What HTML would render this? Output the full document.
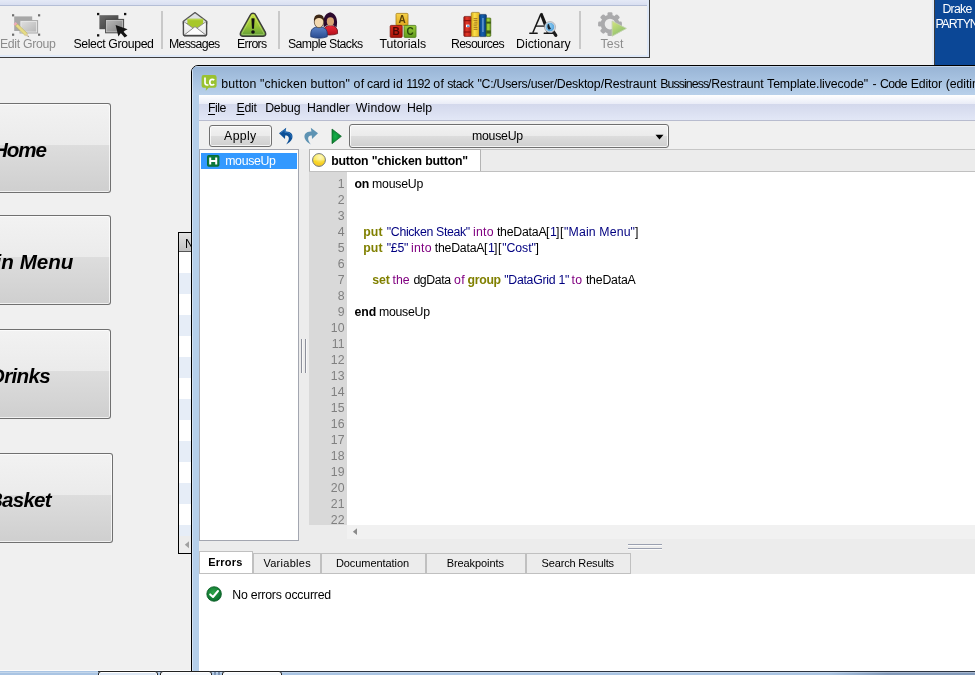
<!DOCTYPE html>
<html><head><meta charset="utf-8"><title>LiveCode</title>
<style>
html,body{margin:0;padding:0;}
html{overflow:hidden;width:975px;height:675px;}
body{width:975px;height:675px;overflow:hidden;background:#f0f0f0;position:relative;font-family:"Liberation Sans",sans-serif;}
div,span,svg{position:absolute;box-sizing:border-box;}
.t{white-space:pre;line-height:1;font-family:"Liberation Sans",sans-serif;}
.t u{text-decoration:underline;text-underline-offset:1.5px;}
.ln{will-change:transform;left:309px;width:35.5px;text-align:right;font-size:12.3px;line-height:1;color:#808080;font-family:"Liberation Sans",sans-serif;}
.big{position:absolute;overflow:hidden;box-shadow:inset 0 0 0 1px rgba(255,255,255,.7);border:1px solid #707070;border-left:none;border-radius:0 3px 3px 0;
  background:linear-gradient(#f2f2f2 0%,#ebebeb 46.5%,#dddddd 46.6%,#cfcfcf 100%);}
.big b{will-change:transform;position:absolute;white-space:pre;line-height:1;font-size:20.6px;font-style:italic;font-weight:bold;color:#000;text-align:right;}
.sep{width:2px;top:11px;height:38px;background:#c9c9c9;}
.btab{top:553px;height:21px;background:#ececec;border:1px solid #c0c0c0;}

</style></head>
<body>
<!-- ===== main toolbar window ===== -->
<div style="left:0;top:0;width:647px;height:5px;background:linear-gradient(#e4e9f6,#d9dff1)"></div>
<div style="left:0;top:5px;width:647px;height:1px;background:#b4bed6"></div>
<div style="left:647px;top:0;width:2px;height:57px;background:#dfe9f8"></div>
<div style="left:0;top:55px;width:649px;height:2px;background:#dfe9f8"></div>
<div style="left:649px;top:0;width:1px;height:58px;background:#3c3c3c"></div>
<div style="left:0;top:57px;width:650px;height:1px;background:#3c3c3c"></div>
<div class="sep" style="left:161px"></div>
<div class="sep" style="left:278px"></div>
<div class="sep" style="left:579px"></div>
<!-- Edit Group (disabled) -->
<svg style="left:10px;top:11px" width="34" height="30" viewBox="0 0 34 30">
  <defs><linearGradient id="eg1" x1="0" y1="0" x2="1" y2="1"><stop offset="0" stop-color="#e2e2e2"/><stop offset="1" stop-color="#b4b4b4"/></linearGradient></defs>
  <rect x="2" y="3.2" width="2.2" height="2.2" fill="#6e6e6e"/><rect x="28" y="3.2" width="2.2" height="2.2" fill="#6e6e6e"/>
  <rect x="2" y="22.6" width="2.2" height="2.2" fill="#6e6e6e"/><rect x="28" y="22.6" width="2.2" height="2.2" fill="#6e6e6e"/>
  <rect x="4.2" y="5.4" width="18" height="14.6" fill="#a7a7a7"/>
  <rect x="10" y="9.6" width="17.6" height="12.4" fill="url(#eg1)" stroke="#a9a9a9" stroke-width="1"/>
  <rect x="11" y="10.6" width="15.6" height="10.4" fill="none" stroke="#e9e9e9" stroke-width=".8"/>
  <g transform="translate(4.6,12.2) rotate(44)">
    <rect x="0" y="-1.5" width="2.6" height="3" fill="#f0a9b6"/>
    <rect x="2.6" y="-1.5" width="13.6" height="3" fill="#e7dc86" stroke="#b9ad55" stroke-width=".5"/>
    <path d="M16.2 -1.5L20.2 0L16.2 1.5Z" fill="#d9c9a9"/><path d="M18.6 -.6L20.4 0L18.6 .6Z" fill="#8a8a8a"/>
  </g>
</svg>
<!-- Select Grouped -->
<svg style="left:95px;top:10px" width="36" height="30" viewBox="0 0 36 30">
  <defs><linearGradient id="sg1" x1="0" y1="0" x2="1" y2="1"><stop offset="0" stop-color="#6a6a6a"/><stop offset="1" stop-color="#3c3c3c"/></linearGradient>
  <linearGradient id="sg2" x1="0" y1="0" x2="1" y2="1"><stop offset="0" stop-color="#bdbdbd"/><stop offset="1" stop-color="#7c7c7c"/></linearGradient></defs>
  <rect x="2" y="2.9" width="2.3" height="2.3" fill="#111"/><rect x="29" y="2.9" width="2.3" height="2.3" fill="#111"/><rect x="2" y="24.2" width="2.3" height="2.3" fill="#111"/>
  <rect x="4.4" y="5.2" width="19" height="14" fill="url(#sg1)"/>
  <rect x="10.6" y="9.4" width="18" height="13.4" fill="url(#sg2)" stroke="#4a4a4a" stroke-width="1"/>
  <rect x="11.6" y="10.4" width="16" height="11.4" fill="none" stroke="#d0d0d0" stroke-width=".7" opacity=".8"/>
  <path d="M20.6 15L32.6 19.2L28.2 21.4L32.4 25.8L29.6 27.6L25.8 23L23.4 26.6Z" fill="#141414"/>
</svg>
<!-- Messages -->
<svg style="left:181px;top:10px" width="28" height="28" viewBox="0 0 28 28">
  <defs><linearGradient id="mg1" x1="0" y1="0" x2="0" y2="1"><stop offset="0" stop-color="#fff"/><stop offset="1" stop-color="#e2e2e2"/></linearGradient></defs>
  <path d="M2.4 11.2L14 2.6L25.6 11.2V14H2.4Z" fill="#dfe1e4" stroke="#555" stroke-width="1.3" stroke-linejoin="round"/>
  <path d="M6.4 8.8H22.2V19H6.4Z" fill="#a7c72a"/>
  <path d="M6.4 8.8H22.2V10.2H6.4Z" fill="#bad64a"/>
  <path d="M2.4 11.2L14 19.6L25.6 11.2V24.6Q25.6 25.6 24.6 25.6H3.4Q2.4 25.6 2.4 24.6Z" fill="url(#mg1)"/>
  <path d="M2.6 11.4L14 19.6L25.4 11.4" fill="none" stroke="#8a8a8a" stroke-width=".9"/>
  <path d="M3 25.2L14 16.6L25 25.2Z" fill="#fcfcfc" stroke="#7c7c7c" stroke-width=".9" stroke-linejoin="round"/>
  <path d="M2.4 11.2V24.6Q2.4 25.6 3.4 25.6H24.6Q25.6 25.6 25.6 24.6V11.2" fill="none" stroke="#4a4a4a" stroke-width="1.4"/>
  <path d="M3 26.2H25" stroke="#3a3a3a" stroke-width=".8" opacity=".7"/>
</svg>
<!-- Errors -->
<svg style="left:238px;top:11px" width="30" height="28" viewBox="0 0 30 28">
  <defs><linearGradient id="er1" x1="0" y1="0" x2="0" y2="1"><stop offset="0" stop-color="#c6df3a"/><stop offset=".55" stop-color="#9ac636"/><stop offset="1" stop-color="#5d9a36"/></linearGradient></defs>
  <path d="M15 2.2Q16.8 2.2 17.6 3.8L27.4 21.4Q28.6 24.8 25.2 25.2H4.8Q1.4 24.8 2.6 21.4L12.4 3.8Q13.2 2.2 15 2.2Z" fill="url(#er1)" stroke="#3c3c3c" stroke-width="1.4" stroke-linejoin="round"/>
  <path d="M15 4.2Q15.8 4.2 16.2 5L25.8 22.2Q26.2 23.6 25 23.6H5Q3.8 23.6 4.2 22.2L13.8 5Q14.2 4.2 15 4.2Z" fill="none" stroke="#e2f0a8" stroke-width=".7" opacity=".55"/>
  <path d="M13.4 7.6Q15 6.8 16.6 7.6L16 17.8H14Z" fill="#111"/><ellipse cx="15" cy="21" rx="1.8" ry="1.7" fill="#111"/>
</svg>
<!-- Sample Stacks -->
<svg style="left:308px;top:10px" width="32" height="30" viewBox="0 0 32 30">
  <defs><linearGradient id="ss1" x1="0" y1="0" x2="0" y2="1"><stop offset="0" stop-color="#ee2a3a"/><stop offset="1" stop-color="#b4101a"/></linearGradient>
  <linearGradient id="ss2" x1="0" y1="0" x2="0" y2="1"><stop offset="0" stop-color="#5f86c9"/><stop offset="1" stop-color="#284a90"/></linearGradient></defs>
  <!-- woman -->
  <path d="M16 24.8Q15.2 19.4 17.2 17.3Q19.3 15.4 22.4 15.4Q25.8 15.4 27.8 17.3Q30 19.4 29.6 23.6Q26.4 25 22 25Z" fill="url(#ss1)" stroke="#6a0c14" stroke-width=".8"/>
  <path d="M15.8 17.2Q13.6 4.6 22.2 2.2Q30.8 4.6 28.6 17.2Q25.4 14.6 22.2 14.6Q19 14.6 15.8 17.2Z" fill="#2c0a2e"/>
  <ellipse cx="22.4" cy="11.4" rx="3.6" ry="4.2" fill="#d8a676"/>
  <!-- man -->
  <path d="M2.8 26.8Q2.2 20.6 4.8 18.6Q7.4 16.6 11 16.6Q14.6 16.6 17.2 18.6Q19.8 20.6 19.2 26.8Q15 28.2 11 28.2Q7 28.2 2.8 26.8Z" fill="url(#ss2)" stroke="#20386c" stroke-width=".8"/>
  <ellipse cx="11" cy="12" rx="4.7" ry="5.7" fill="#f3d9b0" stroke="#4a3a2a" stroke-width=".7"/>
  <path d="M6 11.6Q5.4 4.8 11 4.6Q16.6 4.8 16 11.6Q14.6 8 11 8Q7.4 8 6 11.6Z" fill="#3e2816"/>
</svg>
<!-- Tutorials -->
<svg style="left:388px;top:11px;will-change:transform" width="30" height="28" viewBox="0 0 30 28">
  <defs><linearGradient id="tu1" x1="0" y1="0" x2="0" y2="1"><stop offset="0" stop-color="#f7d34a"/><stop offset="1" stop-color="#e0a820"/></linearGradient>
  <linearGradient id="tu2" x1="0" y1="0" x2="0" y2="1"><stop offset="0" stop-color="#d82a1a"/><stop offset="1" stop-color="#a81408"/></linearGradient>
  <linearGradient id="tu3" x1="0" y1="0" x2="0" y2="1"><stop offset="0" stop-color="#9ccc3a"/><stop offset="1" stop-color="#5f9a1e"/></linearGradient></defs>
  <rect x="8" y="2.4" width="12" height="12" rx="1" fill="url(#tu1)" stroke="#a9801a" stroke-width=".8"/>
  <rect x="2.2" y="14.4" width="12" height="12" rx="1" fill="url(#tu2)" stroke="#7a1008" stroke-width=".8"/>
  <rect x="16" y="14.4" width="12" height="12" rx="1" fill="url(#tu3)" stroke="#4a7a18" stroke-width=".8"/>
  <text x="14" y="12.2" font-family="Liberation Sans" font-weight="bold" font-size="10" text-anchor="middle" fill="#5a4208">A</text>
  <text x="8.2" y="24.2" font-family="Liberation Sans" font-weight="bold" font-size="10" text-anchor="middle" fill="#4a0804">B</text>
  <text x="22" y="24.2" font-family="Liberation Sans" font-weight="bold" font-size="10" text-anchor="middle" fill="#2a4a08">C</text>
</svg>
<!-- Resources -->
<svg style="left:462px;top:10px" width="32" height="30" viewBox="0 0 32 30">
  <defs><linearGradient id="rs1" x1="0" x2="1"><stop offset="0" stop-color="#a81410"/><stop offset=".4" stop-color="#e23a2a"/><stop offset="1" stop-color="#b01a14"/></linearGradient>
  <linearGradient id="rs2" x1="0" x2="1"><stop offset="0" stop-color="#d9a818"/><stop offset=".4" stop-color="#fbe04a"/><stop offset="1" stop-color="#e0b020"/></linearGradient>
  <linearGradient id="rs3" x1="0" x2="1"><stop offset="0" stop-color="#083f7c"/><stop offset=".4" stop-color="#145fae"/><stop offset="1" stop-color="#083f7c"/></linearGradient>
  <linearGradient id="rs4" x1="0" x2="1"><stop offset="0" stop-color="#6a9a1a"/><stop offset=".4" stop-color="#a8d83a"/><stop offset="1" stop-color="#6a9a1a"/></linearGradient></defs>
  <rect x="1.8" y="6.4" width="7.6" height="20" rx="1" fill="url(#rs1)" stroke="#5a0a08" stroke-width=".6"/>
  <rect x="1.8" y="10" width="7.6" height="1.2" fill="#8a100c"/><rect x="1.8" y="21.4" width="7.6" height="1.2" fill="#8a100c"/>
  <rect x="4" y="14.6" width="3.4" height="2.6" fill="#fff"/><rect x="5" y="15.4" width="2.4" height="1.6" fill="#5a9ad8"/>
  <rect x="9.2" y="2.4" width="8.4" height="24.2" rx="1.2" fill="url(#rs2)" stroke="#8a6a10" stroke-width=".6"/>
  <path d="M11.6 8.6H15.4M11.6 10.4H15.4M12.2 12.2H15.4M11.6 14H15.4M11.6 15.8H14.8M11.6 17.6H15.4M11.6 19.4H15.4" stroke="#9a6a18" stroke-width="1" opacity=".85"/>
  <rect x="17.4" y="4.4" width="7" height="22.2" rx="1" fill="url(#rs3)" stroke="#062a5a" stroke-width=".6"/>
  <rect x="20.4" y="8" width="1.1" height="14" fill="#9ac4ea" opacity=".8"/>
  <rect x="24.2" y="8" width="4.6" height="18.4" rx=".8" fill="url(#rs4)" stroke="#3a5a0a" stroke-width=".6"/>
  <rect x="24.2" y="11.6" width="4.6" height="2" fill="#3c5a14"/><rect x="24.2" y="20.4" width="4.6" height="3.2" fill="#3c5a14"/>
</svg>
<!-- Dictionary -->
<svg style="left:526px;top:8px" width="36" height="32" viewBox="0 0 36 32">
  <defs><radialGradient id="dc1" cx=".4" cy=".4" r=".7"><stop offset="0" stop-color="#9ad6f7"/><stop offset="1" stop-color="#3f93d4"/></radialGradient></defs>
  <path d="M15 5.6L6.8 24.8" stroke="#161616" stroke-width="1.5" fill="none"/>
  <path d="M13.9 6.8L15.6 4.8L16.6 5.4L24.6 24.9H20.8Z" fill="#161616"/>
  <path d="M9.8 18.1H19.4" stroke="#161616" stroke-width="1.3"/>
  <path d="M3.8 25.3H11.2M18.2 25.3H26.6" stroke="#161616" stroke-width="1.4" stroke-linecap="round"/>
  <path d="M27 23L29.8 27.4" stroke="#1c1c1c" stroke-width="3.2" stroke-linecap="round"/>
  <circle cx="24" cy="19.1" r="4.9" fill="url(#dc1)" stroke="#cfd6dc" stroke-width="1.3"/>
  <circle cx="24" cy="19.1" r="5.6" fill="none" stroke="#8a8f96" stroke-width=".5"/>
  <path d="M21.6 16.6Q22.8 15.4 23.2 16.8Q23.6 19.2 25 20.6Q23.8 22 22.2 21.2Q20.8 19.2 21.6 16.6Z" fill="#14202c"/>
</svg>
<!-- Test (disabled) -->
<svg style="left:596px;top:10px" width="34" height="30" viewBox="0 0 34 30">
  <defs><linearGradient id="ts1" x1="0" y1="0" x2=".6" y2="1"><stop offset="0" stop-color="#d6e67e"/><stop offset="1" stop-color="#88bd6c"/></linearGradient></defs>
  <g transform="translate(14,14.1)" fill="#aaaaac">
    <circle r="9.3"/>
    <rect x="-2.5" y="-11.9" width="5" height="5" rx="1.3" transform="rotate(0)"/><rect x="-2.5" y="-11.9" width="5" height="5" rx="1.3" transform="rotate(45)"/><rect x="-2.5" y="-11.9" width="5" height="5" rx="1.3" transform="rotate(90)"/><rect x="-2.5" y="-11.9" width="5" height="5" rx="1.3" transform="rotate(135)"/><rect x="-2.5" y="-11.9" width="5" height="5" rx="1.3" transform="rotate(180)"/><rect x="-2.5" y="-11.9" width="5" height="5" rx="1.3" transform="rotate(225)"/><rect x="-2.5" y="-11.9" width="5" height="5" rx="1.3" transform="rotate(270)"/><rect x="-2.5" y="-11.9" width="5" height="5" rx="1.3" transform="rotate(315)"/>
    <circle r="5.3" fill="#ececec"/>
  </g>
  <path d="M16.1 11V26.2L30.4 18.4Z" fill="url(#ts1)" stroke="#c3d3b0" stroke-width=".9" stroke-linejoin="round"/>
</svg>


<!-- ===== Drake block ===== -->
<div style="left:932px;top:0;width:2px;height:65px;background:#dfe9f8"></div>
<div style="left:934px;top:0;width:1px;height:65px;background:#3c3c3c"></div>
<div style="left:935px;top:0;width:40px;height:65px;background:#0b4796"></div>

<!-- ===== left big buttons ===== -->
<div class="big" style="left:-4px;top:103px;width:115px;height:90px"><b style="right:64px;top:35.5px;letter-spacing:-1.1px">Home</b></div>
<div class="big" style="left:-4px;top:215px;width:115px;height:90px"><b style="right:36.4px;top:35.5px">Main Menu</b></div>
<div class="big" style="left:-4px;top:329px;width:115px;height:90px"><b style="right:60px;top:35.5px;letter-spacing:-0.7px">Drinks</b></div>
<div class="big" style="left:-4px;top:453px;width:117px;height:90px"><b style="right:61px;top:35.5px;letter-spacing:-0.8px">Basket</b></div>

<!-- ===== datagrid fragment ===== -->
<div style="left:178px;top:232px;width:14px;height:322px;background:#fff;border:1px solid #000;border-right:none;overflow:hidden">
  <div style="left:0;top:0;width:14px;height:18px;background:linear-gradient(#e2e2e2,#c2c2c2)"></div>
  <div style="left:0;top:18px;width:14px;height:1px;background:#555"></div>
  <span class="t" style="left:6.3px;top:4.6px;font-size:12.3px;color:#000;will-change:transform">N</span>
  <div style="left:0;top:40px;width:14px;height:21px;background:#e6edf7"></div>
  <div style="left:0;top:82px;width:14px;height:21px;background:#e6edf7"></div>
  <div style="left:0;top:124px;width:14px;height:21px;background:#e6edf7"></div>
  <div style="left:0;top:166px;width:14px;height:21px;background:#e6edf7"></div>
  <div style="left:0;top:208px;width:14px;height:21px;background:#e6edf7"></div>
  <div style="left:0;top:250px;width:14px;height:21px;background:#e6edf7"></div>
  <div style="left:0;top:292px;width:14px;height:11px;background:#e6edf7"></div>
  <div style="left:0;top:303px;width:14px;height:17px;background:#ececec"></div>
  <svg style="left:5px;top:308px" width="6" height="8"><path d="M5 0.3V7.3L0.8 3.8Z" fill="#a0a0a0"/></svg>
</div>

<!-- ===== code editor window ===== -->
<div style="left:191px;top:65px;width:800px;height:607px;background:#b5cfea;border:1px solid #000;border-radius:7px 0 0 0;overflow:hidden">
  <div style="left:0;top:0;width:800px;height:29px;background:linear-gradient(#98b4d5,#a9c4e2 55%,#b8d0ea)"></div>
  <div style="left:0;top:0;width:1px;height:605px;background:#d3e2f3"></div>
  <div style="left:0;top:0;width:800px;height:1px;background:#c1d3e8"></div>
</div>
<!-- content -->
<div style="left:199px;top:95px;width:776px;height:576px;background:#ececec"></div>
<!-- menubar -->
<div style="left:199px;top:95px;width:776px;height:9px;background:linear-gradient(#ffffff,#e9ecf7)"></div>
<div style="left:199px;top:104px;width:776px;height:16px;background:linear-gradient(#d3d8ec,#e2e7f6)"></div>
<div style="left:199px;top:120px;width:776px;height:1px;background:#b8bccf"></div>
<div style="left:199px;top:121px;width:776px;height:28px;background:#f0f0f0"></div>
<!-- Apply button -->
<div style="left:209px;top:125px;width:63px;height:22px;border:1px solid #707070;border-radius:3px;background:linear-gradient(#f2f2f2 0%,#ebebeb 48%,#dddddd 50%,#cfcfcf 100%);box-shadow:inset 0 0 0 1px rgba(255,255,255,.75)"></div>
<!-- dropdown -->
<div style="left:349px;top:124px;width:320px;height:24px;border:1px solid #707070;border-radius:3px;background:linear-gradient(#f2f2f2 0%,#ebebeb 48%,#dddddd 50%,#cfcfcf 100%);box-shadow:inset 0 0 0 1px rgba(255,255,255,.75)"></div>
<svg style="left:655px;top:134px" width="10" height="7"><path d="M0.5 0.8H8.5L4.5 5.6Z" fill="#000"/></svg>
<!-- undo / redo / play -->
<svg style="left:277px;top:126px" width="20" height="20" viewBox="0 0 20 20">
  <path d="M2 7.2 L9.2 1.8 L8.6 5.6 C13.5 5.2 16.6 8.4 15.2 12.6 C14.4 15 11.6 17.4 9.2 18.4 C11.6 15.4 12.6 12.2 11.2 10.6 C10.4 9.6 9.2 9.4 8.2 9.6 L8 13 Z" fill="#0c4f96"/>
  <path d="M3.5 7.1 L8.3 3.6 L7.9 6.4 C12 6 14.8 8.4 14.3 11.6" fill="none" stroke="#3f86cc" stroke-width="1" opacity=".7"/>
</svg>
<svg style="left:300px;top:126px" width="20" height="20" viewBox="0 0 20 20">
  <g transform="translate(20,0) scale(-1,1)">
  <path d="M2 7.2 L9.2 1.8 L8.6 5.6 C13.5 5.2 16.6 8.4 15.2 12.6 C14.4 15 11.6 17.4 9.2 18.4 C11.6 15.4 12.6 12.2 11.2 10.6 C10.4 9.6 9.2 9.4 8.2 9.6 L8 13 Z" fill="#5e93b3"/>
  </g>
</svg>
<svg style="left:330px;top:127px" width="13" height="18" viewBox="0 0 13 18"><defs><radialGradient id="pg" cx=".35" cy=".5" r=".6"><stop offset="0" stop-color="#14b24a"/><stop offset="1" stop-color="#0b7a2c"/></radialGradient></defs><path d="M2 2V16.7L11.4 9.3Z" fill="url(#pg)" stroke="#0a6424" stroke-width=".7" stroke-linejoin="round"/></svg>

<!-- handler list -->
<div style="left:199px;top:149px;width:100px;height:392px;background:#fff;border:1px solid #a3a6b0"></div>
<div style="left:201px;top:153px;width:96px;height:16px;background:#3399ff"></div>
<svg style="left:207px;top:155px" width="13" height="12" viewBox="0 0 13 12"><rect x="0" y="0" width="12.4" height="11.8" rx="1.8" fill="#0b6b35"/><rect x="1" y="1" width="10.4" height="9.8" rx="1.2" fill="#0f7a3c"/><path d="M3.2 2.4V9.4M9.2 2.4V9.4M3.2 5.9H9.2" stroke="#fff" stroke-width="2" fill="none"/></svg>
<!-- splitter grip -->
<div style="left:301px;top:339px;width:1px;height:34px;background:#8c8f9a"></div><div style="left:302px;top:339px;width:1px;height:34px;background:#f8f8f8"></div>
<div style="left:305px;top:339px;width:1px;height:34px;background:#8c8f9a"></div><div style="left:306px;top:339px;width:1px;height:34px;background:#f8f8f8"></div>

<!-- tab bar -->
<div style="left:309px;top:149px;width:666px;height:1px;background:#c6c6c6"></div>
<div style="left:309px;top:171px;width:666px;height:1px;background:#c0c0c0"></div>
<div style="left:309px;top:149px;width:172px;height:22px;background:#fff;border:1px solid #b4b4b4;border-bottom:none"></div>
<svg style="left:311px;top:152px" width="16" height="16" viewBox="0 0 16 16"><defs><linearGradient id="yg" x1="0" y1="0" x2="0" y2="1"><stop offset="0" stop-color="#fdf27a"/><stop offset=".5" stop-color="#fbe85a"/><stop offset=".56" stop-color="#f9da22"/><stop offset="1" stop-color="#f6c52a"/></linearGradient><radialGradient id="yh" cx=".6" cy=".3" r=".5"><stop offset="0" stop-color="#fff" stop-opacity=".55"/><stop offset="1" stop-color="#fff" stop-opacity="0"/></radialGradient></defs><circle cx="8" cy="8" r="6.4" fill="url(#yg)" stroke="#70767e" stroke-width="1"/><circle cx="8" cy="8" r="5.8" fill="url(#yh)"/></svg>
<!-- code area -->
<div style="left:309px;top:172px;width:666px;height:353px;background:#fff"></div>
<div style="left:309px;top:172px;width:38px;height:353px;background:#d9d9d9"></div>
<div class="ln" style="top:177.59px">1</div><div class="ln" style="top:193.59px">2</div><div class="ln" style="top:209.59px">3</div><div class="ln" style="top:225.59px">4</div><div class="ln" style="top:241.59px">5</div><div class="ln" style="top:257.59px">6</div><div class="ln" style="top:273.59px">7</div><div class="ln" style="top:289.59px">8</div><div class="ln" style="top:305.59px">9</div><div class="ln" style="top:321.59px">10</div><div class="ln" style="top:337.59px">11</div><div class="ln" style="top:353.59px">12</div><div class="ln" style="top:369.59px">13</div><div class="ln" style="top:385.59px">14</div><div class="ln" style="top:401.59px">15</div><div class="ln" style="top:417.59px">16</div><div class="ln" style="top:433.59px">17</div><div class="ln" style="top:449.59px">18</div><div class="ln" style="top:465.59px">19</div><div class="ln" style="top:481.59px">20</div><div class="ln" style="top:497.59px">21</div><div class="ln" style="top:513.59px">22</div>
<div style="left:347px;top:525px;width:628px;height:14px;background:#f1f1f1"></div>
<svg style="left:352px;top:528px" width="6" height="8"><path d="M5 0.3V7.1L0.9 3.7Z" fill="#8a8a8a"/></svg>
<!-- grip h -->
<div style="left:628px;top:544px;width:34px;height:1px;background:#9aa0b0"></div><div style="left:628px;top:545px;width:34px;height:1px;background:#fafafa"></div>
<div style="left:628px;top:548px;width:34px;height:1px;background:#9aa0b0"></div><div style="left:628px;top:549px;width:34px;height:1px;background:#fafafa"></div>

<!-- bottom pane -->
<div style="left:199px;top:574px;width:776px;height:97px;background:#fff"></div>
<div style="left:199px;top:573px;width:432px;height:1px;background:#c0c0c0"></div>
<div class="btab" style="left:253px;width:68px"></div>
<div class="btab" style="left:321px;width:105px"></div>
<div class="btab" style="left:426px;width:100px"></div>
<div class="btab" style="left:526px;width:105px"></div>
<div style="left:199px;top:551px;width:54px;height:22px;background:#fff;border:1px solid #c0c0c0;border-bottom:none"></div>
<svg style="left:206px;top:586px" width="16" height="16" viewBox="0 0 16 16"><defs><radialGradient id="cg" cx=".45" cy=".4" r=".6"><stop offset="0" stop-color="#2ea648"/><stop offset="1" stop-color="#0a6c2c"/></radialGradient></defs><circle cx="8.1" cy="8" r="7.3" fill="url(#cg)" stroke="#0a5c26" stroke-width=".8"/><path d="M4.2 8.4L7 11L12 5" fill="none" stroke="#fff" stroke-width="2" stroke-linecap="round" stroke-linejoin="round"/></svg>

<!-- title icon -->
<svg style="left:201px;top:74px" width="17" height="18" viewBox="0 0 17 18"><path d="M2.6 1H13.4Q15.6 1 15.6 3.2V11.6Q15.6 13.8 13.4 13.8H7.6L4.8 16.8L5 13.8H2.6Q0.6 13.8 0.6 11.6V3.2Q0.6 1 2.6 1Z" fill="#9ac230"/><path d="M4 3.6V8.8Q4 11 6.2 11H7.4" fill="none" stroke="#fff" stroke-width="1.7"/><path d="M13.2 6.2Q12.4 5.4 11.2 5.4Q8.8 5.4 8.8 8.2Q8.8 11 11.2 11Q12.4 11 13.2 10.2" fill="none" stroke="#fff" stroke-width="1.7"/></svg>

<!-- ===== taskbar ===== -->
<div style="left:0;top:670px;width:191px;height:1px;background:#fbfbfb"></div>
<div style="left:0;top:671px;width:975px;height:4px;background:linear-gradient(90deg,#a9c4e3 0%,#a9c4e3 85%,#8199ba 91%,#8199ba 100%)"></div>
<div style="left:0;top:672px;width:975px;height:1px;background:rgba(255,255,255,.3)"></div>
<div style="left:98px;top:671px;width:877px;height:1px;background:#2c3440"></div>
<div style="left:98px;top:671px;width:60px;height:8px;border:1px solid #222;border-radius:3px;background:#dde8f5;box-shadow:inset 0 0 0 1px #fff"></div>
<div style="left:160px;top:671px;width:52px;height:8px;border:1px solid #222;border-radius:3px;background:#f4f8fc;box-shadow:inset 0 0 0 1px #fff"></div>
<div style="left:214px;top:672px;width:2px;height:3px;background:#7d93b2"></div><div style="left:218px;top:672px;width:2px;height:3px;background:#7d93b2"></div>
<div style="left:222px;top:671px;width:60px;height:8px;border:1px solid #222;border-radius:3px;background:#f4f8fc;box-shadow:inset 0 0 0 1px #fff"></div>

<div style="left:0;top:0;width:975px;height:675px;will-change:transform">
<span class="t" style="left:-0.10px;top:37.59px;font-size:12.3px;color:#8c8c8c;letter-spacing:-0.310px;">Edit Group</span>
<span class="t" style="left:73.40px;top:37.59px;font-size:12.3px;color:#000;letter-spacing:-0.375px;">Select Grouped</span>
<span class="t" style="left:168.90px;top:37.59px;font-size:12.3px;color:#000;letter-spacing:-0.668px;">Messages</span>
<span class="t" style="left:236.90px;top:37.59px;font-size:12.3px;color:#000;letter-spacing:-0.631px;">Errors</span>
<span class="t" style="left:287.90px;top:37.59px;font-size:12.3px;color:#000;letter-spacing:-0.563px;">Sample Stacks</span>
<span class="t" style="left:379.40px;top:37.59px;font-size:12.3px;color:#000;letter-spacing:-0.000px;">Tutorials</span>
<span class="t" style="left:450.90px;top:37.59px;font-size:12.3px;color:#000;letter-spacing:-0.620px;">Resources</span>
<span class="t" style="left:516.10px;top:37.59px;font-size:12.3px;color:#000;letter-spacing:-0.017px;">Dictionary</span>
<span class="t" style="left:600.40px;top:37.59px;font-size:12.3px;color:#8c8c8c;letter-spacing:0.159px;">Test</span>
<span class="t" style="left:942.40px;top:3.09px;font-size:12.3px;color:#fff;letter-spacing:-0.723px;">Drake</span>
<span class="t" style="left:935.40px;top:18.09px;font-size:12.3px;color:#fff;letter-spacing:-1.092px;">PARTYN</span>
<span class="t" style="left:221.20px;top:77.59px;font-size:12.3px;color:#000;letter-spacing:0.199px;">button</span>
<span class="t" style="left:259.90px;top:77.59px;font-size:12.3px;color:#000;letter-spacing:0.129px;">&quot;chicken button&quot;</span>
<span class="t" style="left:353.40px;top:77.59px;font-size:12.3px;color:#000;letter-spacing:0.617px;">of</span>
<span class="t" style="left:367.00px;top:77.59px;font-size:12.3px;color:#000;letter-spacing:-0.255px;">card</span>
<span class="t" style="left:393.00px;top:77.59px;font-size:12.3px;color:#000;letter-spacing:0.161px;">id</span>
<span class="t" style="left:406.20px;top:77.59px;font-size:12.3px;color:#000;letter-spacing:-0.688px;">1192</span>
<span class="t" style="left:433.20px;top:77.59px;font-size:12.3px;color:#000;letter-spacing:0.417px;">of</span>
<span class="t" style="left:447.20px;top:77.59px;font-size:12.3px;color:#000;letter-spacing:-0.501px;">stack</span>
<span class="t" style="left:477.40px;top:77.59px;font-size:12.3px;color:#000;letter-spacing:-0.235px;">&quot;C:/Users/user/Desktop</span>
<span class="t" style="left:600.70px;top:77.59px;font-size:12.3px;color:#000;letter-spacing:-0.123px;">/Restraunt</span>
<span class="t" style="left:660.20px;top:77.59px;font-size:12.3px;color:#000;letter-spacing:-0.883px;">Bussiness</span>
<span class="t" style="left:707.90px;top:77.59px;font-size:12.3px;color:#000;letter-spacing:-0.093px;">/Restraunt</span>
<span class="t" style="left:767.10px;top:77.59px;font-size:12.3px;color:#000;letter-spacing:-0.111px;">Template.livecode&quot;</span>
<span class="t" style="left:872.40px;top:77.59px;font-size:12.3px;color:#000;letter-spacing:1.091px;">-</span>
<span class="t" style="left:880.00px;top:77.59px;font-size:12.3px;color:#000;letter-spacing:-0.627px;">Code</span>
<span class="t" style="left:910.80px;top:77.59px;font-size:12.3px;color:#000;letter-spacing:-0.187px;">Editor</span>
<span class="t" style="left:945.70px;top:77.59px;font-size:12.3px;color:#000;letter-spacing:-0.055px;">(editing</span>
<span class="t" style="left:208.00px;top:101.59px;font-size:12.3px;color:#000;letter-spacing:-0.457px;"><u>F</u>ile</span>
<span class="t" style="left:236.40px;top:101.59px;font-size:12.3px;color:#000;letter-spacing:-0.201px;"><u>E</u>dit</span>
<span class="t" style="left:265.20px;top:101.59px;font-size:12.3px;color:#000;letter-spacing:-0.210px;">Debug</span>
<span class="t" style="left:307.00px;top:101.59px;font-size:12.3px;color:#000;letter-spacing:-0.068px;">Handler</span>
<span class="t" style="left:355.80px;top:101.59px;font-size:12.3px;color:#000;letter-spacing:0.175px;">Window</span>
<span class="t" style="left:407.00px;top:101.59px;font-size:12.3px;color:#000;letter-spacing:-0.049px;">Help</span>
<span class="t" style="left:224.10px;top:129.59px;font-size:12.3px;color:#000;letter-spacing:0.347px;">Apply</span>
<span class="t" style="left:472.00px;top:129.59px;font-size:12.3px;color:#000;letter-spacing:-0.249px;">mouseUp</span>
<span class="t" style="left:225.20px;top:154.59px;font-size:12.3px;color:#fff;letter-spacing:-0.320px;">mouseUp</span>
<span class="t" style="left:331.20px;top:154.59px;font-size:12.3px;color:#000;letter-spacing:-0.172px;font-weight:bold;">button &quot;chicken button&quot;</span>
<span class="t" style="left:354.40px;top:177.59px;font-size:12.3px;color:#000;letter-spacing:-0.266px;font-weight:bold;">on</span>
<span class="t" style="left:372.10px;top:177.59px;font-size:12.3px;color:#000;letter-spacing:-0.234px;">mouseUp</span>
<span class="t" style="left:363.30px;top:225.59px;font-size:12.3px;color:#808000;letter-spacing:0.058px;font-weight:bold;">put</span>
<span class="t" style="left:386.80px;top:225.59px;font-size:12.3px;color:#000080;letter-spacing:-0.329px;">&quot;Chicken Steak&quot;</span>
<span class="t" style="left:473.00px;top:225.59px;font-size:12.3px;color:#800080;letter-spacing:0.268px;">into</span>
<span class="t" style="left:496.90px;top:225.59px;font-size:12.3px;color:#000;letter-spacing:-0.223px;">theDataA</span>
<span class="t" style="left:545.90px;top:225.59px;font-size:12.3px;color:#000;letter-spacing:0.778px;">[</span>
<span class="t" style="left:549.90px;top:225.59px;font-size:12.3px;color:#000080;letter-spacing:-1.144px;">1</span>
<span class="t" style="left:555.90px;top:225.59px;font-size:12.3px;color:#000;letter-spacing:0.678px;">][</span>
<span class="t" style="left:564.10px;top:225.59px;font-size:12.3px;color:#000080;letter-spacing:0.131px;">&quot;Main Menu&quot;</span>
<span class="t" style="left:634.90px;top:225.59px;font-size:12.3px;color:#000;letter-spacing:0.878px;">]</span>
<span class="t" style="left:363.30px;top:241.59px;font-size:12.3px;color:#808000;letter-spacing:0.058px;font-weight:bold;">put</span>
<span class="t" style="left:386.80px;top:241.59px;font-size:12.3px;color:#000080;letter-spacing:-0.305px;">&quot;£5&quot;</span>
<span class="t" style="left:410.90px;top:241.59px;font-size:12.3px;color:#800080;letter-spacing:0.268px;">into</span>
<span class="t" style="left:434.70px;top:241.59px;font-size:12.3px;color:#000;letter-spacing:-0.198px;">theDataA</span>
<span class="t" style="left:483.90px;top:241.59px;font-size:12.3px;color:#000;letter-spacing:0.778px;">[</span>
<span class="t" style="left:487.90px;top:241.59px;font-size:12.3px;color:#000080;letter-spacing:-1.144px;">1</span>
<span class="t" style="left:493.90px;top:241.59px;font-size:12.3px;color:#000;letter-spacing:0.678px;">][</span>
<span class="t" style="left:502.20px;top:241.59px;font-size:12.3px;color:#000080;letter-spacing:-0.069px;">&quot;Cost&quot;</span>
<span class="t" style="left:535.60px;top:241.59px;font-size:12.3px;color:#000;letter-spacing:0.878px;">]</span>
<span class="t" style="left:372.30px;top:273.59px;font-size:12.3px;color:#808000;letter-spacing:-0.160px;font-weight:bold;">set</span>
<span class="t" style="left:392.50px;top:273.59px;font-size:12.3px;color:#800080;letter-spacing:-0.003px;">the</span>
<span class="t" style="left:413.40px;top:273.59px;font-size:12.3px;color:#000;letter-spacing:-0.409px;">dgData</span>
<span class="t" style="left:454.10px;top:273.59px;font-size:12.3px;color:#800080;letter-spacing:0.367px;">of</span>
<span class="t" style="left:467.60px;top:273.59px;font-size:12.3px;color:#808000;letter-spacing:-0.329px;font-weight:bold;">group</span>
<span class="t" style="left:504.20px;top:273.59px;font-size:12.3px;color:#000080;letter-spacing:-0.275px;">&quot;DataGrid 1&quot;</span>
<span class="t" style="left:571.40px;top:273.59px;font-size:12.3px;color:#800080;letter-spacing:0.467px;">to</span>
<span class="t" style="left:585.90px;top:273.59px;font-size:12.3px;color:#000;letter-spacing:-0.198px;">theDataA</span>
<span class="t" style="left:354.60px;top:305.59px;font-size:12.3px;color:#000;letter-spacing:-0.158px;font-weight:bold;">end</span>
<span class="t" style="left:378.90px;top:305.59px;font-size:12.3px;color:#000;letter-spacing:-0.249px;">mouseUp</span>
<span class="t" style="left:208.20px;top:556.69px;font-size:11px;color:#000;letter-spacing:0.245px;font-weight:bold;">Errors</span>
<span class="t" style="left:263.40px;top:557.69px;font-size:11px;color:#000;letter-spacing:0.284px;">Variables</span>
<span class="t" style="left:335.90px;top:557.69px;font-size:11px;color:#000;letter-spacing:-0.069px;">Documentation</span>
<span class="t" style="left:446.70px;top:557.69px;font-size:11px;color:#000;letter-spacing:-0.081px;">Breakpoints</span>
<span class="t" style="left:541.60px;top:557.69px;font-size:11px;color:#000;letter-spacing:-0.164px;">Search Results</span>
<span class="t" style="left:232.30px;top:588.59px;font-size:12.3px;color:#000;letter-spacing:-0.218px;">No errors occurred</span>
</div>

</body></html>
